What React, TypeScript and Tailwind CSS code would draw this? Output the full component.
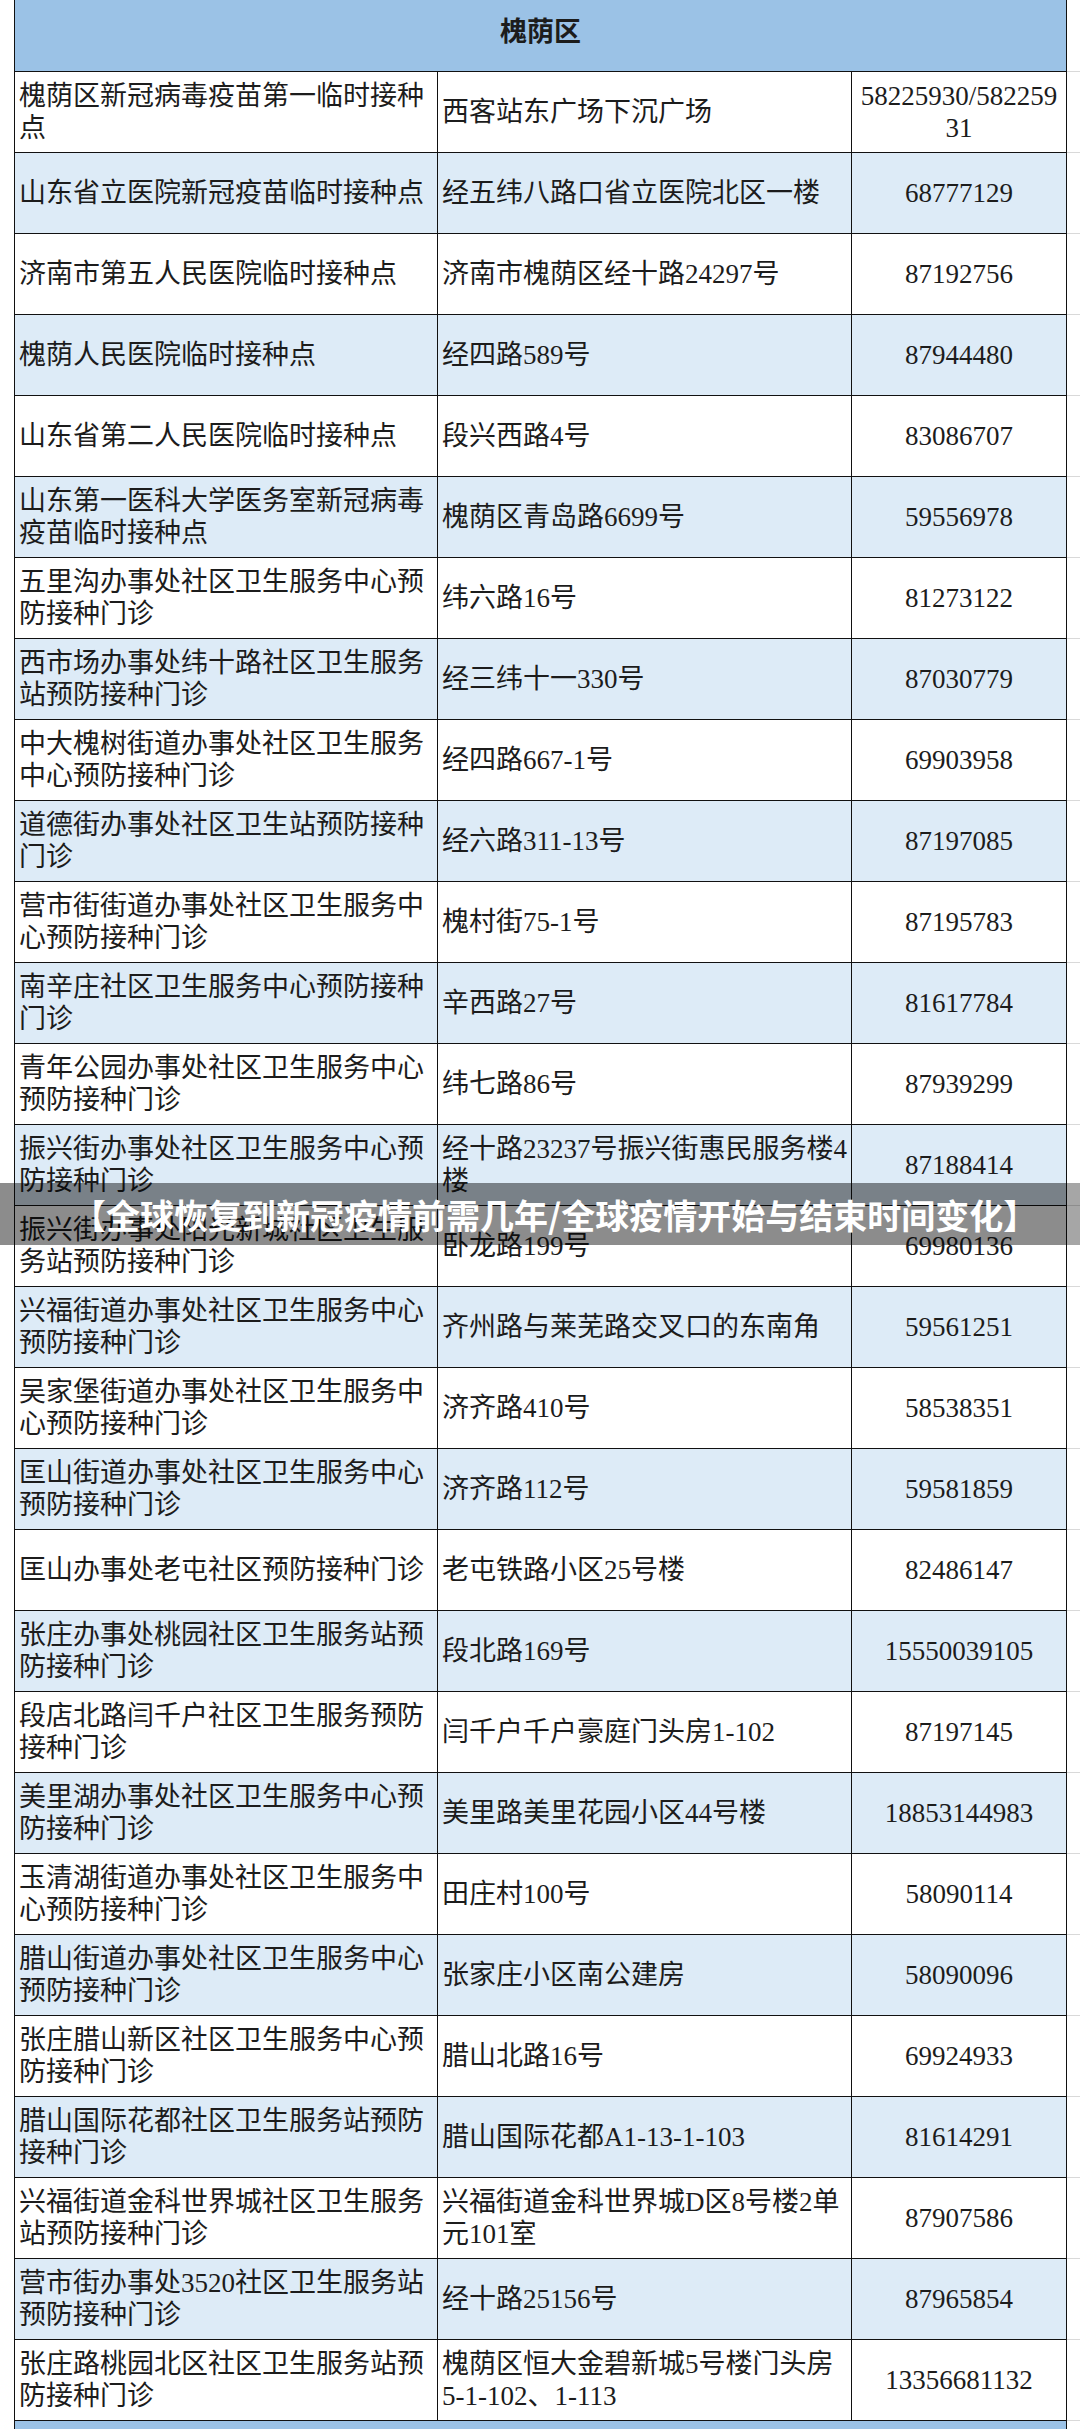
import React from "react";

const rows: [string, string, string][] = [
  ["槐荫区新冠病毒疫苗第一临时接种点", "西客站东广场下沉广场", "58225930/58225931"],
  ["山东省立医院新冠疫苗临时接种点", "经五纬八路口省立医院北区一楼", "68777129"],
  ["济南市第五人民医院临时接种点", "济南市槐荫区经十路24297号", "87192756"],
  ["槐荫人民医院临时接种点", "经四路589号", "87944480"],
  ["山东省第二人民医院临时接种点", "段兴西路4号", "83086707"],
  ["山东第一医科大学医务室新冠病毒疫苗临时接种点", "槐荫区青岛路6699号", "59556978"],
  ["五里沟办事处社区卫生服务中心预防接种门诊", "纬六路16号", "81273122"],
  ["西市场办事处纬十路社区卫生服务站预防接种门诊", "经三纬十一330号", "87030779"],
  ["中大槐树街道办事处社区卫生服务中心预防接种门诊", "经四路667-1号", "69903958"],
  ["道德街办事处社区卫生站预防接种门诊", "经六路311-13号", "87197085"],
  ["营市街街道办事处社区卫生服务中心预防接种门诊", "槐村街75-1号", "87195783"],
  ["南辛庄社区卫生服务中心预防接种门诊", "辛西路27号", "81617784"],
  ["青年公园办事处社区卫生服务中心预防接种门诊", "纬七路86号", "87939299"],
  ["振兴街办事处社区卫生服务中心预防接种门诊", "经十路23237号振兴街惠民服务楼4楼", "87188414"],
  ["振兴街办事处阳光新城社区卫生服务站预防接种门诊", "卧龙路199号", "69980136"],
  ["兴福街道办事处社区卫生服务中心预防接种门诊", "齐州路与莱芜路交叉口的东南角", "59561251"],
  ["吴家堡街道办事处社区卫生服务中心预防接种门诊", "济齐路410号", "58538351"],
  ["匡山街道办事处社区卫生服务中心预防接种门诊", "济齐路112号", "59581859"],
  ["匡山办事处老屯社区预防接种门诊", "老屯铁路小区25号楼", "82486147"],
  ["张庄办事处桃园社区卫生服务站预防接种门诊", "段北路169号", "15550039105"],
  ["段店北路闫千户社区卫生服务预防接种门诊", "闫千户千户豪庭门头房1-102", "87197145"],
  ["美里湖办事处社区卫生服务中心预防接种门诊", "美里路美里花园小区44号楼", "18853144983"],
  ["玉清湖街道办事处社区卫生服务中心预防接种门诊", "田庄村100号", "58090114"],
  ["腊山街道办事处社区卫生服务中心预防接种门诊", "张家庄小区南公建房", "58090096"],
  ["张庄腊山新区社区卫生服务中心预防接种门诊", "腊山北路16号", "69924933"],
  ["腊山国际花都社区卫生服务站预防接种门诊", "腊山国际花都A1-13-1-103", "81614291"],
  ["兴福街道金科世界城社区卫生服务站预防接种门诊", "兴福街道金科世界城D区8号楼2单元101室", "87907586"],
  ["营市街办事处3520社区卫生服务站预防接种门诊", "经十路25156号", "87965854"],
  ["张庄路桃园北区社区卫生服务站预防接种门诊", "槐荫区恒大金碧新城5号楼门头房5-1-102、1-113", "13356681132"],
];

const font = {
  fontFamily: '"Liberation Serif", "Noto Sans CJK SC", serif',
};

export default function App() {
  return (
    <div
      className="relative w-[1080px] h-[2429px] overflow-hidden bg-white text-[#1c1c1c]"
      style={font}
    >
      {/* header */}
      <div className="flex h-[72px]">
        <div className="w-[14px] shrink-0" />
        <div className="w-[1053px] shrink-0 flex items-center justify-center bg-[#9bc2e6] border-l border-r border-b border-[#111] text-[27px] font-bold leading-none pb-[6px]">
          槐荫区
        </div>
        <div className="flex-1 border-b border-[#d9d9d9]" />
      </div>

      {rows.map((r, i) => (
        <div key={i} className="flex h-[81px]">
          <div className="w-[14px] shrink-0" />
          <div
            className={`w-[424px] shrink-0 flex items-center border-l border-r border-b border-[#111] pl-[4px] pr-[2px] text-[27px] leading-[32px] ${
              i % 2 === 1 ? "bg-[#ddebf7]" : "bg-white"
            }`}
          >
            <div>{r[0]}</div>
          </div>
          <div
            className={`w-[414px] shrink-0 flex items-center border-r border-b border-[#111] pl-[4px] pr-[1px] text-[27px] leading-[32px] ${
              i % 2 === 1 ? "bg-[#ddebf7]" : "bg-white"
            }`}
          >
            <div>{r[1]}</div>
          </div>
          <div
            className={`w-[215px] shrink-0 flex items-center justify-center border-r border-b border-[#111] px-[4px] text-[27px] leading-[32px] text-center break-all ${
              i % 2 === 1 ? "bg-[#ddebf7]" : "bg-white"
            }`}
          >
            <div>{r[2]}</div>
          </div>
          <div className="flex-1 border-b border-[#d9d9d9]" />
        </div>
      ))}

      {/* next district header (cut off) */}
      <div className="flex h-[72px]">
        <div className="w-[14px] shrink-0" />
        <div className="w-[1053px] shrink-0 bg-[#9bc2e6] border-l border-r border-[#111]" />
        <div className="flex-1" />
      </div>

      {/* overlay banner */}
      <div className="absolute left-0 top-[1183px] w-[1080px] h-[62px] flex">
        <div className="w-[1067px] h-full bg-black/45" />
        <div className="flex-1 h-full bg-black/35" />
        <div
          className="absolute inset-0 flex items-center pl-[72px] pt-[2px] text-white text-[34px] font-bold leading-none whitespace-nowrap"
          style={{ fontFamily: '"Noto Sans CJK SC", "Noto Sans", sans-serif' }}
        >
          【全球恢复到新冠疫情前需几年/全球疫情开始与结束时间变化】
        </div>
      </div>
    </div>
  );
}
